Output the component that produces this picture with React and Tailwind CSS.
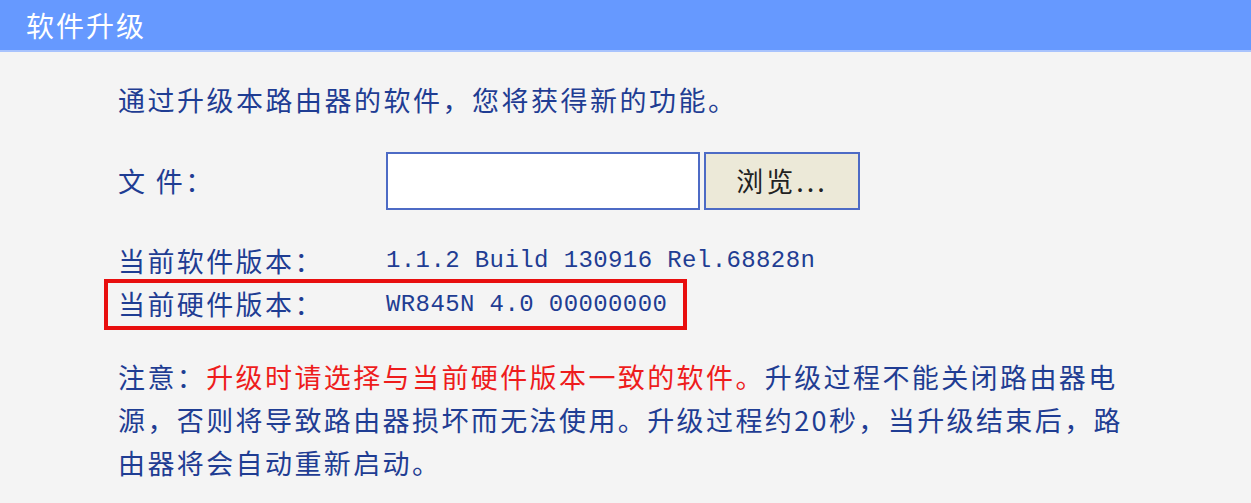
const cjk = { fontFamily: '"Noto Sans CJK SC", "Noto Sans", sans-serif' };
const mono = { fontFamily: '"Liberation Mono", "Noto Sans CJK SC", monospace' };

function InfoRow({ label, value, boxed }) {
    return (
        <div
            className={
                boxed
                    ? "-ml-[14px] flex h-[51px] w-[583px] items-center border-4 border-[#e80e0e] pl-[10px]"
                    : "flex h-[36px] items-center"
            }
        >
            <span className="w-[268px] shrink-0 tracking-[2.4px]">{label}</span>
            <span className="text-[24px] tracking-[0.4px]" style={mono}>
                {value}
            </span>
        </div>
    );
}

export default function App() {
    return (
        <div
            className="h-[503px] w-[1251px] overflow-hidden bg-[#f4f4f4] text-[27px] text-[#1f3d93]"
            style={cjk}
        >
            {/* title bar */}
            <div className="flex h-[52px] items-center border-b-2 border-[#a8c3fd] bg-[#6699ff] pl-[26px] text-[28px] tracking-[2px] text-white">
                软件升级
            </div>

            <div className="pl-[118px]">
                <p className="mt-[26px] leading-[44px] tracking-[2.5px]">
                    通过升级本路由器的软件，您将获得新的功能。
                </p>

                {/* file picker */}
                <div className="mt-[30px] flex h-[58px] items-center">
                    <span className="w-[268px] shrink-0 tracking-[2.4px]">文 件：</span>
                    <div className="h-[58px] w-[314px] border-2 border-[#4d6bc5] bg-white" />
                    <button className="ml-[4px] flex h-[58px] w-[156px] items-center justify-center border-2 border-[#4d6bc5] bg-[#ece9d8] tracking-[3px] text-[#222]">
                        浏览...
                    </button>
                </div>

                <div className="mt-[33px]">
                    <InfoRow label="当前软件版本：" value="1.1.2 Build 130916 Rel.68828n" />
                    <InfoRow label="当前硬件版本：" value="WR845N 4.0 00000000" boxed />
                </div>

                {/* note */}
                <p className="mt-[25px] leading-[43px] tracking-[2.4px]">
                    注意：<span className="text-[#ee1c1c]">升级时请选择与当前硬件版本一致的软件。</span>
                    升级过程不能关闭路由器电
                    <br />
                    源，否则将导致路由器损坏而无法使用。升级过程约20秒，当升级结束后，路
                    <br />
                    由器将会自动重新启动。
                </p>
            </div>
        </div>
    );
}
